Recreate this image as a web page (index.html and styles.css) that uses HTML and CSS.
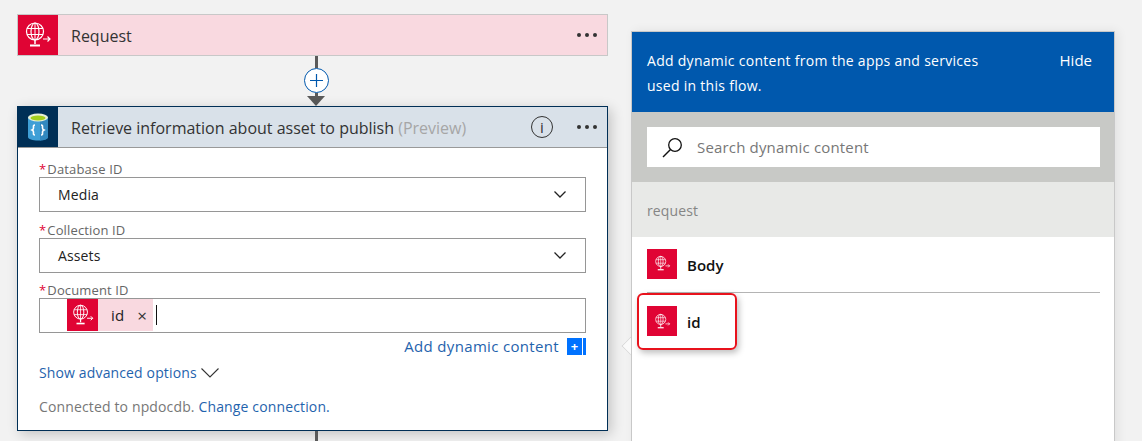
FILE: index.html
```html
<!DOCTYPE html>
<html lang="en">
<head>
    <meta charset="utf-8" />
    <title>Retrieve information about asset to publish</title>
    <link rel="stylesheet" href="styles.css">
</head>
<body>
    <svg class="defs" width="0" height="0">
        <symbol id="globe" viewBox="0 0 32 32">
            <g fill="none" stroke="#fff" stroke-width="1.2">
                <circle cx="13" cy="12.500" r="8.500" />
                <ellipse cx="13" cy="12.500" rx="4" ry="8.500" />
                <path d="M5 9.500h16M5 15.500h16M13 4v17" stroke-width="1" />
                <path d="M13 21v4" stroke-width="1.500" />
                <path d="M8 26.500h10" stroke-width="2" />
                <path d="M21 20h7M25.500 17.500 28 20l-2.500 2.500" stroke-width="1.200" />
            </g>
        </symbol>
    </svg>

    <main class="canvas">
        <section class="flow">
            <div class="card card-request">
                <div class="card-icon icon-red">
                    <svg class="globe-lg"><use href="#globe" /></svg>
                </div>
                <div class="card-title">Request</div>
                <div class="dots"><i></i><i></i><i></i></div>
            </div>

            <div class="connector">
                <div class="line"></div>
                <div class="plus">
                    <svg width="13" height="13" viewBox="0 0 13 13"><path d="M6.500 0v13M0 6.500h13" stroke="#0058ad" stroke-width="1.200" /></svg>
                </div>
                <div class="stem"></div>
                <div class="arrow"></div>
            </div>

            <div class="card-open">
                <div class="card card-action">
                    <div class="card-icon icon-navy">
                        <svg width="22" height="28" viewBox="0 0 22 28">
                            <path d="M1 4v20c0 2 4.500 3.500 10 3.500s10-1.500 10-3.500V4z" fill="#3f9fd6" />
                            <path d="M13 4h8v20c0 2-3.500 3.300-8 3.500z" fill="#3288bf" />
                            <ellipse cx="11" cy="4.500" rx="10" ry="4" fill="#e8f0d8" />
                            <ellipse cx="11" cy="5" rx="7.500" ry="2.600" fill="#a3cf1e" />
                            <path d="M8 12c-2 0-1.500 1.500-1.500 3s-.5 1.500-1.500 2c1 .5 1.500.5 1.500 2s-.5 3 1.500 3M14 12c2 0 1.500 1.500 1.500 3s.5 1.500 1.500 2c-1 .5-1.500.5-1.500 2s.5 3-1.500 3" fill="none" stroke="#fff" stroke-width="1.600" />
                        </svg>
                    </div>
                    <div class="card-title">Retrieve information about asset to publish <span class="muted">(Preview)</span></div>
                    <div class="info">i</div>
                    <div class="dots"><i></i><i></i><i></i></div>
                </div>

                <div class="card-body">
                    <div class="field">
                        <label class="field-label"><span class="req">*</span>Database ID</label>
                        <div class="input">
                            <span class="value">Media</span>
                            <svg class="chev" width="12" height="7" viewBox="0 0 12 7"><path d="M.5.500 6 6l5.500-5.500" fill="none" stroke="#222" stroke-width="1.300" /></svg>
                        </div>
                    </div>
                    <div class="field field-second">
                        <label class="field-label"><span class="req">*</span>Collection ID</label>
                        <div class="input">
                            <span class="value">Assets</span>
                            <svg class="chev" width="12" height="7" viewBox="0 0 12 7"><path d="M.5.500 6 6l5.500-5.500" fill="none" stroke="#222" stroke-width="1.300" /></svg>
                        </div>
                    </div>
                    <div class="field">
                        <label class="field-label"><span class="req">*</span>Document ID</label>
                        <div class="input input-token">
                            <span class="token">
                                <span class="token-icon icon-red"><svg class="globe-md"><use href="#globe" /></svg></span>
                                <span class="token-name">id</span>
                                <span class="token-x">×</span>
                            </span>
                            <span class="caret"></span>
                        </div>
                    </div>

                    <div class="add-row">
                        <a class="link add-link">Add dynamic content</a>
                        <span class="add-btn"><span class="add-plus">+</span><span class="add-bar"></span></span>
                    </div>

                    <div class="advanced">
                        <a class="link">Show advanced options</a>
                        <svg width="18" height="10" viewBox="0 0 18 10"><path d="M.5.500 9 9 17.500.500" fill="none" stroke="#333" stroke-width="1.100" /></svg>
                    </div>

                    <div class="connected">Connected to npdocdb. <a class="link">Change connection.</a></div>
                </div>
            </div>

            <div class="line line-end"></div>
        </section>

        <aside class="panel">
            <div class="panel-head">
                <p>Add dynamic content from the apps and services used in this flow.</p>
                <a class="hide">Hide</a>
            </div>
            <div class="panel-search">
                <div class="search-box">
                    <svg width="21" height="21" viewBox="0 0 21 21"><circle cx="13" cy="8" r="6.300" fill="none" stroke="#111" stroke-width="1.300" /><path d="M8.500 12.500 1 20" stroke="#111" stroke-width="1.500" /></svg>
                    <span>Search dynamic content</span>
                </div>
            </div>
            <div class="panel-group">request</div>
            <div class="panel-row row-line">
                <span class="row-icon icon-red"><svg class="globe-sm"><use href="#globe" /></svg></span>
                <span class="row-name">Body</span>
            </div>
            <div class="panel-row">
                <span class="row-icon icon-red"><svg class="globe-sm"><use href="#globe" /></svg></span>
                <span class="row-name">id</span>
            </div>
            <div class="highlight"></div>
            <div class="tail"></div>
        </aside>
    </main>
</body>
</html>
```

FILE: styles.css
```css
html, body {
    margin: 0;
    height: 441px;
    overflow: hidden;
}

body {
    background: #f2f2f2;
    font: 14px/20px "Open Sans", sans-serif;
    letter-spacing: 0.14px;
    color: #333;
}

p {
    margin: 0;
}

.defs {
    position: absolute;
}

.canvas {
    display: flex;
    align-items: flex-start;
    gap: 23px;
    padding: 14px 0 0 17px;
}

.flow {
    width: 591px;
    display: flex;
    flex-direction: column;
    align-items: center;
}

/* cards */
.card {
    width: 100%;
    box-sizing: border-box;
    height: 42px;
    display: flex;
    align-items: center;
    border: 1px solid #c8c8c8;
}

.card-request {
    background: #f9d9e0;
}

.card-icon {
    width: 40px;
    height: 40px;
    flex: none;
    display: flex;
    align-items: center;
    justify-content: center;
}

.icon-red {
    background: #e00434;
}

.icon-navy {
    background: #002f56;
}

.globe-lg {
    width: 32px;
    height: 32px;
}

.globe-md {
    width: 26px;
    height: 26px;
}

.globe-sm {
    width: 19px;
    height: 19px;
}

.card-title {
    flex: 1;
    margin: 1px 0 0 13px;
    font-size: 16px;
    letter-spacing: 0;
    white-space: nowrap;
}

.muted {
    color: #a6a6a6;
}

.dots {
    display: flex;
    gap: 4px;
    margin-right: 10px;
}

.dots i {
    width: 4px;
    height: 4px;
    border-radius: 50%;
    background: #333;
}

.info {
    width: 20px;
    height: 20px;
    border: 1.5px solid #333;
    border-radius: 50%;
    margin-right: 24px;
    font-size: 15px;
    line-height: 20px;
    text-align: center;
}

/* connector */
.connector {
    height: 50px;
    margin-left: 7px;
    display: flex;
    flex-direction: column;
    align-items: center;
}

.line {
    width: 3px;
    height: 12px;
    background: #5a5a5a;
}

.plus {
    box-sizing: border-box;
    width: 25px;
    height: 25px;
    flex: none;
    border: 1px solid #0058ad;
    border-radius: 50%;
    background: #fff;
    display: flex;
    align-items: center;
    justify-content: center;
}

.stem {
    width: 3px;
    height: 3px;
    background: #5a5a5a;
}

.arrow {
    width: 0;
    height: 0;
    border-left: 9px solid transparent;
    border-right: 9px solid transparent;
    border-top: 10px solid #5a5a5a;
}

.card-open {
    width: 100%;
    box-sizing: border-box;
    background: #fff;
    border: 1px solid #002f56;
    box-shadow: 3px 3px 12px rgba(0, 0, 0, 0.2);
}

.card-action {
    height: 41px;
    background: #d9e1e9;
    border: 0;
    border-bottom: 1px solid #999;
}

.card-body {
    padding: 4px 21px 0;
    height: 282px;
    box-sizing: border-box;
}

.line-end {
    height: 10px;
    margin-left: 7px;
}

/* form fields */
.field-second {
    margin-top: 1px;
}

.field-label {
    height: 25px;
    display: flex;
    align-items: flex-end;
    line-height: 16px;
    font-size: 13px;
    color: #666;
}

.req {
    color: #e00434;
    margin-right: 1px;
}

.input {
    box-sizing: border-box;
    height: 35px;
    border: 1px solid #969696;
    display: flex;
    align-items: center;
    justify-content: space-between;
    padding: 0 19px 0 18px;
}

.value {
    font-size: 14px;
    color: #222;
}

.input-token {
    justify-content: flex-start;
    padding: 0 0 1px 27px;
}

.token {
    height: 32px;
    display: flex;
    align-items: center;
    background: #f9d9e0;
}

.token-icon {
    width: 31px;
    height: 32px;
    display: flex;
    align-items: center;
    justify-content: center;
}

.token-name {
    margin-left: 13px;
    font-size: 15px;
    color: #222;
}

.token-x {
    margin: 2px 6px 0 13px;
    font-size: 17px;
    color: #333;
}

.caret {
    width: 1px;
    height: 20px;
    margin-left: 3px;
    background: #111;
}

.link {
    color: #1f63ad;
}

.add-row {
    display: flex;
    justify-content: flex-end;
    align-items: center;
    gap: 8px;
    margin-top: 4px;
    height: 18px;
}

.add-link {
    font-size: 15px;
    letter-spacing: 0.33px;
}

.add-btn {
    display: flex;
    height: 17px;
}

.add-plus {
    width: 15px;
    background: #0072ff;
    color: #fff;
    font-size: 13px;
    line-height: 16px;
    font-weight: 700;
    text-align: center;
}

.add-bar {
    width: 3px;
    margin-left: 1px;
    background: #0072ff;
}

.advanced {
    display: flex;
    align-items: center;
    gap: 4px;
    margin-top: 8px;
}

.connected {
    margin-top: 14px;
    color: #777;
}

/* dynamic content panel */
.panel {
    position: relative;
    width: 484px;
    height: 420px;
    margin-top: 17px;
    box-sizing: border-box;
    background: #fff;
    border: 1px solid #c8c8c8;
    border-width: 1px 1px 0 1px;
    box-shadow: 3px 0 10px rgba(0, 0, 0, 0.07);
}

.panel-head {
    height: 80px;
    box-sizing: border-box;
    background: #0058ad;
    color: #fff;
    display: flex;
    justify-content: space-between;
    padding: 16px 22px 0 15px;
    line-height: 25px;
    letter-spacing: 0.28px;
}

.panel-head p {
    width: 365px;
}

.hide {
    font-size: 15px;
    letter-spacing: 0;
}

.panel-search {
    height: 70px;
    box-sizing: border-box;
    padding: 15px 14px 15px 15px;
    background: #c8c9c6;
}

.search-box {
    height: 40px;
    background: #fff;
    display: flex;
    align-items: center;
    gap: 14px;
    padding-left: 15px;
    font-size: 15px;
    letter-spacing: 0.17px;
    color: #777;
}

.panel-group {
    height: 55px;
    line-height: 57px;
    padding-left: 15px;
    background: #e8e9e7;
    color: #858585;
}

.panel-row {
    height: 56px;
    margin: 0 14px 0 15px;
    display: flex;
    align-items: center;
    gap: 10px;
    box-sizing: border-box;
}

.row-line {
    padding-bottom: 2px;
    border-bottom: 1px solid #b4b4b4;
}

.row-icon {
    width: 30px;
    height: 30px;
    display: flex;
    align-items: center;
    justify-content: center;
}

.row-name {
    margin-top: 2px;
    font-size: 15px;
    font-weight: 600;
    letter-spacing: 0;
    color: #111;
}

.highlight {
    position: absolute;
    left: 5px;
    top: 261px;
    width: 96px;
    height: 53px;
    border: 2px solid #e8121c;
    border-radius: 6px;
    box-shadow: 2px 3px 6px rgba(0, 0, 0, 0.25);
}

.tail {
    position: absolute;
    left: -8px;
    top: 307px;
    width: 14px;
    height: 14px;
    box-sizing: border-box;
    background: #fafafa;
    border-left: 1px solid #d8d8d8;
    border-bottom: 1px solid #d8d8d8;
    transform: rotate(45deg);
    clip-path: polygon(0 0, 0 100%, 100% 100%);
}
```
